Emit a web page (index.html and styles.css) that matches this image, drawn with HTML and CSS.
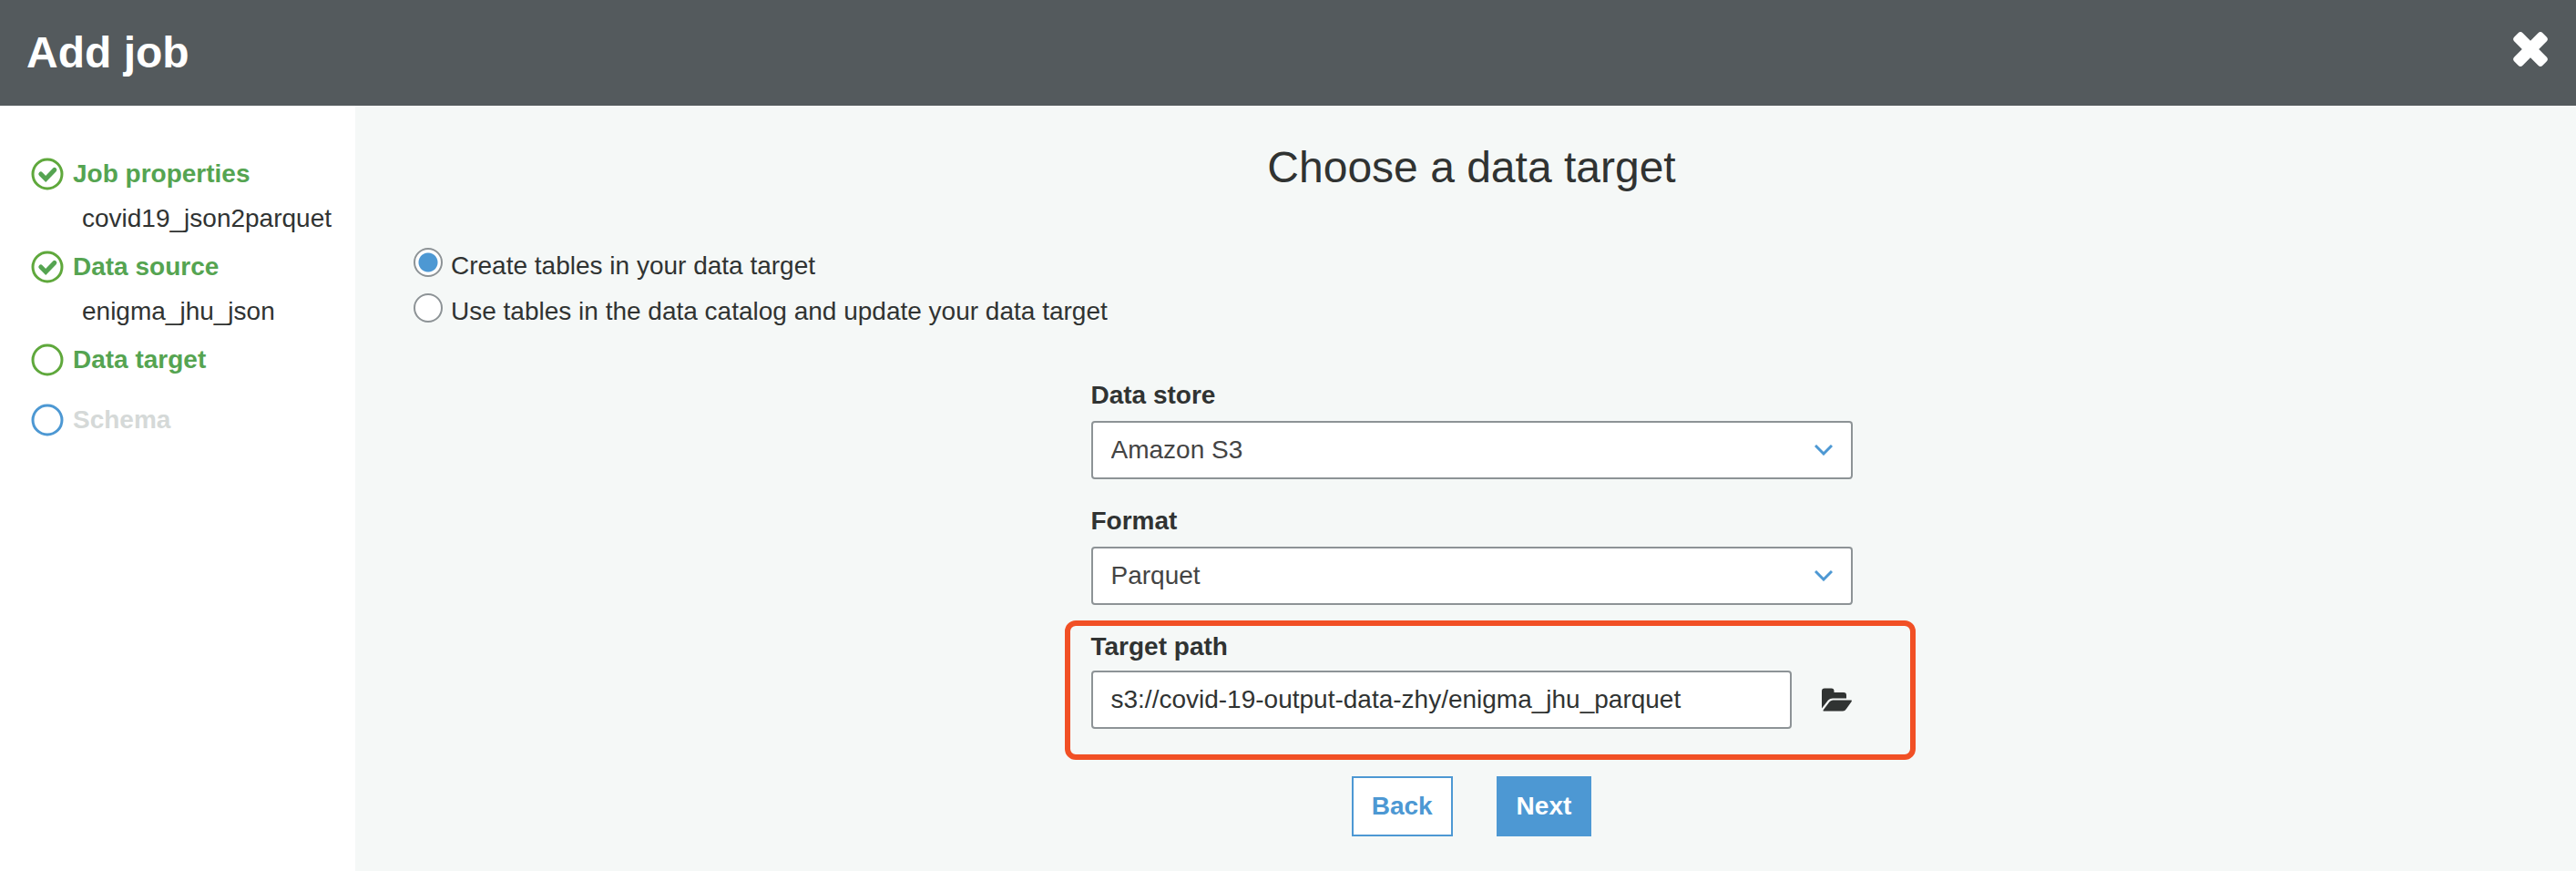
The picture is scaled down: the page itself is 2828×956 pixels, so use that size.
FILE: index.html
```html
<!DOCTYPE html>
<html lang="en">
<head>
<meta charset="utf-8">
<title>Add job</title>
<link rel="stylesheet" href="styles.css">
</head>
<body>
<header class="topbar">
  <h1 class="topbar-title">Add job</h1>
  <button class="close" type="button" aria-label="Close">
    <svg width="38" height="38" viewBox="-19 -19 38 38" fill="#fff" aria-hidden="true">
      <rect x="-22" y="-6.5" width="44" height="13" rx="3.5" transform="rotate(45)"/>
      <rect x="-22" y="-6.5" width="44" height="13" rx="3.5" transform="rotate(-45)"/>
    </svg>
  </button>
</header>
<div class="layout">
  <nav class="sidebar" aria-label="Steps">
    <ol class="steps">
      <li>
        <div class="step done">
          <svg class="step-icon" viewBox="0 0 36 36" aria-hidden="true"><circle cx="18" cy="18" r="16"/><path d="M10.800 18l5.400 5.400 9.600-10"/></svg>
          <span>Job properties</span>
        </div>
        <div class="detail">covid19_json2parquet</div>
      </li>
      <li>
        <div class="step done">
          <svg class="step-icon" viewBox="0 0 36 36" aria-hidden="true"><circle cx="18" cy="18" r="16"/><path d="M10.800 18l5.400 5.400 9.600-10"/></svg>
          <span>Data source</span>
        </div>
        <div class="detail">enigma_jhu_json</div>
      </li>
      <li>
        <div class="step done">
          <svg class="step-icon" viewBox="0 0 36 36" aria-hidden="true"><circle cx="18" cy="18" r="16"/></svg>
          <span>Data target</span>
        </div>
      </li>
      <li>
        <div class="step pending">
          <svg class="step-icon" viewBox="0 0 36 36" aria-hidden="true"><circle cx="18" cy="18" r="16"/></svg>
          <span>Schema</span>
        </div>
      </li>
    </ol>
  </nav>
  <main class="content">
    <h2 class="content-title">Choose a data target</h2>
    <form class="form">
      <div class="radios">
        <label class="radio"><input type="radio" name="mode" checked><span>Create tables in your data target</span></label>
        <label class="radio"><input type="radio" name="mode"><span>Use tables in the data catalog and update your data target</span></label>
      </div>
      <div class="fields">
        <div class="field">
          <label for="store">Data store</label>
          <div class="select">
            <select id="store"><option>Amazon S3</option></select>
            <svg class="chevron" width="20" height="12" viewBox="0 0 20 12" aria-hidden="true"><path d="M1 1l9 9 9-9"/></svg>
          </div>
        </div>
        <div class="field">
          <label for="format">Format</label>
          <div class="select">
            <select id="format"><option>Parquet</option></select>
            <svg class="chevron" width="20" height="12" viewBox="0 0 20 12" aria-hidden="true"><path d="M1 1l9 9 9-9"/></svg>
          </div>
        </div>
        <div class="field highlighted">
          <label for="path">Target path</label>
          <div class="path-row">
            <input id="path" type="text" value="s3://covid-19-output-data-zhy/enigma_jhu_parquet">
            <button class="browse" type="button" aria-label="Browse">
              <svg width="34" height="26" viewBox="0 0 34 26" fill="#303332" aria-hidden="true">
                <path d="M0 22.5V3.5Q0 .5 3 .5h7.5Q13.500 .5 13.500 3.500V5H24q3 0 3 3v3.500H12q-3.200 0-5 2z"/>
                <path d="M10 14.200Q11 13.500 12.500 13.500H32q1.600 0 .7 1.400l-5.900 8.300Q25.500 25.500 23 25.500H3q-2.400 0-1.100-1.600L8.300 15.600Q9.200 14.600 10 14.200z"/>
              </svg>
            </button>
          </div>
        </div>
      </div>
      <div class="actions">
        <button class="btn" type="button">Back</button>
        <button class="btn primary" type="submit">Next</button>
      </div>
    </form>
  </main>
</div>
</body>
</html>
```

FILE: styles.css
```css
* {
  box-sizing: border-box;
}

body {
  margin: 0;
  min-height: 100vh;
  display: flex;
  flex-direction: column;
  font: 28px/40px "Liberation Sans", Arial, sans-serif;
  color: #303332;
  background: #f5f8f7;
}

h1,
h2,
ol {
  margin: 0;
  padding: 0;
}

button,
input,
select {
  font: inherit;
  color: inherit;
}

.topbar {
  display: flex;
  align-items: center;
  justify-content: space-between;
  padding: 28px 31px 28px 29px;
  background: #545a5d;
  color: #fff;
}

.topbar-title {
  font-size: 48px;
  line-height: 60px;
}

.close,
.browse {
  display: flex;
  padding: 0;
  border: 0;
  background: none;
  cursor: pointer;
}

.close {
  margin-bottom: 8px;
}

.layout {
  flex: 1;
  display: grid;
  grid-template-columns: 390px 1fr;
}

.sidebar {
  padding: 44px 20px 40px 34px;
  background: #fff;
}

.steps {
  display: grid;
  gap: 4px;
  list-style: none;
}

.step {
  display: flex;
  align-items: center;
  gap: 10px;
  height: 62px;
  font-weight: bold;
}

.step-icon {
  width: 36px;
  height: 36px;
  fill: none;
  stroke: #5fa83c;
  stroke-width: 3;
}

.step-icon path {
  stroke: #55a451;
  stroke-width: 5;
  stroke-linecap: round;
}

.done {
  color: #55a451;
}

.pending {
  color: #d5d9d8;
}

.pending .step-icon {
  stroke: #4d98d3;
}

.detail {
  padding-left: 56px;
  line-height: 36px;
}

.content {
  padding: 41px 51px 37px 64px;
}

.content-title {
  font-size: 48px;
  font-weight: normal;
  line-height: 54px;
  text-align: center;
}

.form {
  display: grid;
  gap: 52px;
  margin-top: 61px;
}

.radios {
  display: grid;
  justify-items: start;
  gap: 10px;
}

.radio {
  display: flex;
  align-items: flex-start;
  gap: 9px;
}

.radio input {
  appearance: none;
  width: 32px;
  height: 32px;
  margin: 0;
  border: 2px solid #8d9396;
  border-radius: 50%;
  background: #fff;
}

.radio input:checked {
  background: radial-gradient(circle, #4d98d3 10px, #fff 11px);
}

.fields {
  display: grid;
  gap: 26px;
  width: 100%;
  max-width: 836px;
  margin: 0 auto;
}

.field {
  display: grid;
  gap: 8px;
}

.field > label {
  font-weight: bold;
}

.select {
  display: grid;
  align-items: center;
}

.select select,
.path-row input {
  width: 100%;
  height: 64px;
  padding: 0 20px;
  border: 2px solid #8d9396;
  border-radius: 4px;
  background: #fff;
}

.select select {
  grid-area: 1 / 1;
  appearance: none;
  color: #444;
}

.chevron {
  grid-area: 1 / 1;
  justify-self: end;
  margin-right: 22px;
  fill: none;
  stroke: #4d98d3;
  stroke-width: 3;
  pointer-events: none;
}

.path-row {
  display: flex;
  align-items: center;
  gap: 33px;
}

.path-row input {
  flex: 1;
  min-width: 0;
}

.highlighted {
  position: relative;
  gap: 6px;
}

.highlighted::after {
  content: "";
  position: absolute;
  inset: -9px -69px -34px -29px;
  border: 6px solid #f15025;
  border-radius: 12px;
  pointer-events: none;
}

.actions {
  display: flex;
  justify-content: center;
  gap: 48px;
}

.btn {
  height: 66px;
  padding: 0 20px;
  border: 2px solid #4d98d3;
  background: #fff;
  color: #4d98d3;
  font-weight: bold;
  cursor: pointer;
}

.primary {
  background: #4d98d3;
  color: #fff;
}
```
